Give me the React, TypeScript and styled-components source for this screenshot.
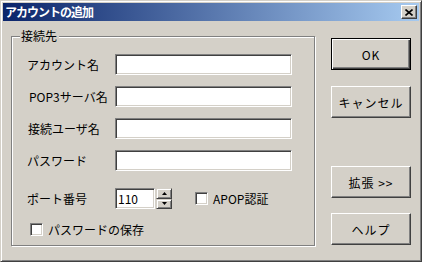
import React from "react";
import styled, { createGlobalStyle } from "styled-components";

const FACE = "#d4d0c8";
const SHADOW = "#808080";
const DARK = "#404040";

const GlobalStyle = createGlobalStyle`
  html, body {
    margin: 0;
    padding: 0;
    background: ${FACE};
  }

  body {
    font-family: "Noto Sans CJK JP", "MS UI Gothic", sans-serif;
    font-size: 12px;
    color: #000;
  }
`;

const StyledWindow = styled.div`
  width: 422px;
  height: 262px;
  box-sizing: border-box;
  display: flex;
  flex-direction: column;
  background: ${FACE};
  border: 1px solid;
  border-color: ${FACE} ${DARK} ${DARK} ${FACE};
  box-shadow: inset 1px 1px 0 #fff, inset -1px -1px 0 ${SHADOW};
  padding: 2px;
`;

const StyledTitleBar = styled.div`
  height: 18px;
  display: flex;
  align-items: center;
  justify-content: space-between;
  padding: 0 2px 0 2px;
  background: linear-gradient(to right, #0a246a, #a6caf0);
`;

const StyledTitleText = styled.div`
  color: #fff;
  font-weight: bold;
  font-size: 12px;
  line-height: 18px;
  letter-spacing: -1px;
`;

const StyledCloseButton = styled.div`
  width: 16px;
  height: 14px;
  box-sizing: border-box;
  display: flex;
  align-items: center;
  justify-content: center;
  background: ${FACE};
  border: 1px solid;
  border-color: #fff ${DARK} ${DARK} #fff;
  box-shadow: inset -1px -1px 0 ${SHADOW};
`;

const StyledBody = styled.div`
  flex: 1;
  display: flex;
  padding: 15px 0 0 8px;
`;

const StyledGroup = styled.div`
  position: relative;
  width: 304px;
  height: 210px;
  box-sizing: border-box;
  border: 1px solid ${SHADOW};
  box-shadow: 1px 1px 0 #fff, inset 1px 1px 0 #fff;
  display: flex;
  flex-direction: column;
  padding: 17px 0 0 15px;
`;

const StyledGroupLabel = styled.div`
  position: absolute;
  top: -8px;
  left: 8px;
  padding: 0 2px 0 1px;
  background: ${FACE};
  line-height: 14px;
`;

const StyledRow = styled.div<{ $gap: number }>`
  display: flex;
  align-items: center;
  height: 21px;
  margin-top: ${({ $gap }) => $gap}px;
`;

const StyledLabel = styled.div<{ $shift?: number }>`
  width: 88px;
  padding-left: ${({ $shift }) => $shift ?? 0}px;
  box-sizing: border-box;
  white-space: nowrap;
`;

const StyledInput = styled.div<{ $width: number }>`
  width: ${({ $width }) => $width}px;
  height: 21px;
  box-sizing: border-box;
  background: #fff;
  border: 1px solid;
  border-color: ${SHADOW} #fff #fff ${SHADOW};
  box-shadow: inset 1px 1px 0 ${DARK}, inset -1px -1px 0 ${FACE};
  padding: 0 2px;
  line-height: 19px;
`;

const StyledSpinner = styled.div`
  width: 16px;
  height: 21px;
  margin-left: 1px;
  display: flex;
  flex-direction: column;
`;

const StyledSpinHalf = styled.div`
  flex: 1;
  box-sizing: border-box;
  display: flex;
  align-items: center;
  justify-content: center;
  background: ${FACE};
  border: 1px solid;
  border-color: ${FACE} ${DARK} ${DARK} ${FACE};
  box-shadow: inset 1px 1px 0 #fff, inset -1px -1px 0 ${SHADOW};
`;

const StyledCheckRow = styled.div<{ $left: number }>`
  display: flex;
  align-items: center;
  gap: 5px;
  height: 13px;
  line-height: 13px;
  margin-left: ${({ $left }) => $left}px;
`;

const StyledCheckbox = styled.div`
  width: 13px;
  height: 13px;
  box-sizing: border-box;
  background: #fff;
  border: 1px solid;
  border-color: ${SHADOW} #fff #fff ${SHADOW};
  box-shadow: inset 1px 1px 0 ${DARK}, inset -1px -1px 0 ${FACE};
`;

const StyledSaveRow = styled.div`
  display: flex;
  margin-top: 14px;
`;

const StyledButtons = styled.div`
  display: flex;
  flex-direction: column;
  margin-left: 16px;
  padding-top: 2px;
`;

const StyledButton = styled.div<{ $default?: boolean; $gap: number }>`
  width: 80px;
  height: 32px;
  box-sizing: border-box;
  margin-top: ${({ $gap }) => $gap}px;
  display: flex;
  align-items: center;
  justify-content: center;
  letter-spacing: 1px;
  background: ${FACE};
  border: 1px solid;
  border-color: ${({ $default }) => ($default ? "#000" : `#fff ${DARK} ${DARK} #fff`)};
  box-shadow: ${({ $default }) =>
    $default
      ? `inset 1px 1px 0 #fff, inset -1px -1px 0 ${DARK}, inset -2px -2px 0 ${SHADOW}`
      : `inset -1px -1px 0 ${SHADOW}`};
`;

const Arrow = ({ up }: { up?: boolean }) => (
  <svg width="5" height="3" viewBox="0 0 5 3">
    <path d={up ? "M2.5 0 L5 3 L0 3 Z" : "M0 0 L5 0 L2.5 3 Z"} fill="#000" />
  </svg>
);

const fields = [
  { label: "アカウント名", shift: 0 },
  { label: "POP3サーバ名", shift: 2 },
  { label: "接続ユーザ名", shift: 1 },
  { label: "パスワード", shift: 0 },
];

export default function App() {
  return (
    <>
      <GlobalStyle />
      <StyledWindow>
        <StyledTitleBar>
          <StyledTitleText>アカウントの追加</StyledTitleText>
          <StyledCloseButton>
            <svg width="8" height="7" viewBox="0 0 8 7">
              <path d="M0.5 0.5 L7.5 6.5 M7.5 0.5 L0.5 6.5" stroke="#000" strokeWidth="1.6" />
            </svg>
          </StyledCloseButton>
        </StyledTitleBar>

        <StyledBody>
          <StyledGroup>
            <StyledGroupLabel>接続先</StyledGroupLabel>
            {fields.map((field, i) => (
              <StyledRow key={field.label} $gap={i === 0 ? 0 : 11}>
                <StyledLabel $shift={field.shift}>{field.label}</StyledLabel>
                <StyledInput $width={177} />
              </StyledRow>
            ))}
            <StyledRow $gap={17}>
              <StyledLabel>ポート番号</StyledLabel>
              <StyledInput $width={40}>110</StyledInput>
              <StyledSpinner>
                <StyledSpinHalf>
                  <Arrow up />
                </StyledSpinHalf>
                <StyledSpinHalf>
                  <Arrow />
                </StyledSpinHalf>
              </StyledSpinner>
              <StyledCheckRow $left={23}>
                <StyledCheckbox />
                APOP認証
              </StyledCheckRow>
            </StyledRow>
            <StyledSaveRow>
              <StyledCheckRow $left={3}>
                <StyledCheckbox />
                パスワードの保存
              </StyledCheckRow>
            </StyledSaveRow>
          </StyledGroup>

          <StyledButtons>
            <StyledButton $default $gap={0}>
              OK
            </StyledButton>
            <StyledButton $gap={16}>キャンセル</StyledButton>
            <StyledButton $gap={48}>拡張 &gt;&gt;</StyledButton>
            <StyledButton $gap={15}>ヘルプ</StyledButton>
          </StyledButtons>
        </StyledBody>
      </StyledWindow>
    </>
  );
}
